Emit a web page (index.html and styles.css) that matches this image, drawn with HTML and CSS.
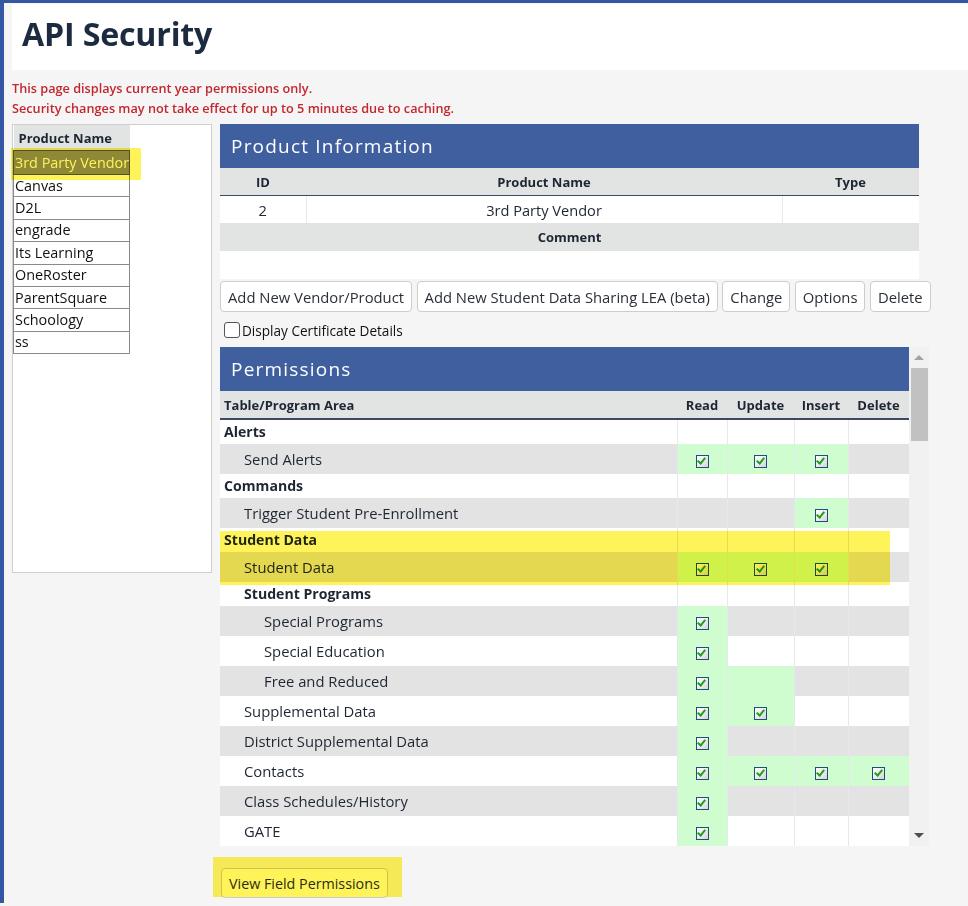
FILE: index.html
```html
<!DOCTYPE html>
<html lang="en">
<head>
<meta charset="utf-8">
<title>API Security</title>
<link rel="stylesheet" href="styles.css">
</head>
<body>
<div class="frame">
  <header class="page-head"><h1>API Security</h1></header>
  <div class="notes">
    <p>This page displays current year permissions only.</p>
    <p>Security changes may not take effect for up to 5 minutes due to caching.</p>
  </div>
  <div class="main">
    <aside class="products">
      <table class="plist">
        <thead><tr><th>Product Name</th></tr></thead>
        <tbody>
          <tr class="sel"><td>3rd Party Vendor</td></tr>
          <tr><td>Canvas</td></tr>
          <tr><td>D2L</td></tr>
          <tr><td>engrade</td></tr>
          <tr><td>Its Learning</td></tr>
          <tr><td>OneRoster</td></tr>
          <tr><td>ParentSquare</td></tr>
          <tr><td>Schoology</td></tr>
          <tr><td>ss</td></tr>
        </tbody>
      </table>
      <div class="hl hl-product"></div>
    </aside>
    <section class="detail">
      <div class="panel info">
        <div class="panel-title">Product Information</div>
        <table class="itable">
          <thead><tr><th class="c-id">ID</th><th class="c-name">Product Name</th><th class="c-type">Type</th></tr></thead>
          <tbody>
            <tr class="irow"><td>2</td><td>3rd Party Vendor</td><td></td></tr>
            <tr class="ihead"><th colspan="3">Comment</th></tr>
            <tr class="iempty"><td colspan="3"></td></tr>
          </tbody>
        </table>
      </div>
      <div class="actions">
        <button class="btn">Add New Vendor/Product</button>
        <button class="btn">Add New Student Data Sharing LEA (beta)</button>
        <button class="btn">Change</button>
        <button class="btn">Options</button>
        <button class="btn">Delete</button>
      </div>
      <label class="cert"><span class="cert-box"></span>Display Certificate Details</label>
      <div class="perm-wrap">
        <div class="perm-scroll">
          <div class="panel-title perm-title">Permissions</div>
          <table class="ptable">
            <colgroup><col class="w-area"><col class="w-r"><col class="w-u"><col class="w-i"><col class="w-d"></colgroup>
            <thead><tr><th class="area">Table/Program Area</th><th>Read</th><th>Update</th><th>Insert</th><th>Delete</th></tr></thead>
            <tbody>
              <tr class="grp"><td class="area">Alerts</td><td></td><td></td><td></td><td></td></tr>
              <tr class="item alt"><td class="area l1">Send Alerts</td><td class="on"><span class="cb"></span></td><td class="on"><span class="cb"></span></td><td class="on"><span class="cb"></span></td><td></td></tr>
              <tr class="grp"><td class="area">Commands</td><td></td><td></td><td></td><td></td></tr>
              <tr class="item alt"><td class="area l1">Trigger Student Pre-Enrollment</td><td></td><td></td><td class="on"><span class="cb"></span></td><td></td></tr>
              <tr class="grp"><td class="area">Student Data</td><td></td><td></td><td></td><td></td></tr>
              <tr class="item alt"><td class="area l1">Student Data</td><td class="on"><span class="cb"></span></td><td class="on"><span class="cb"></span></td><td class="on"><span class="cb"></span></td><td></td></tr>
              <tr class="grp"><td class="area l1">Student Programs</td><td></td><td></td><td></td><td></td></tr>
              <tr class="item alt"><td class="area l2">Special Programs</td><td class="on"><span class="cb"></span></td><td></td><td></td><td></td></tr>
              <tr class="item"><td class="area l2">Special Education</td><td class="on"><span class="cb"></span></td><td></td><td></td><td></td></tr>
              <tr class="item alt"><td class="area l2">Free and Reduced</td><td class="on"><span class="cb"></span></td><td class="on"></td><td></td><td></td></tr>
              <tr class="item"><td class="area l1">Supplemental Data</td><td class="on"><span class="cb"></span></td><td class="on"><span class="cb"></span></td><td></td><td></td></tr>
              <tr class="item alt"><td class="area l1">District Supplemental Data</td><td class="on"><span class="cb"></span></td><td></td><td></td><td></td></tr>
              <tr class="item"><td class="area l1">Contacts</td><td class="on"><span class="cb"></span></td><td class="on"><span class="cb"></span></td><td class="on"><span class="cb"></span></td><td class="on"><span class="cb"></span></td></tr>
              <tr class="item alt"><td class="area l1">Class Schedules/History</td><td class="on"><span class="cb"></span></td><td></td><td></td><td></td></tr>
              <tr class="item"><td class="area l1">GATE</td><td class="on"><span class="cb"></span></td><td></td><td></td><td></td></tr>
              <tr class="item alt"><td class="area l1"></td><td class="on"></td><td class="on"></td><td class="on"></td><td class="on"></td></tr>
            </tbody>
          </table>
          <div class="hl hl-perm"></div>
        </div>
        <div class="vscroll">
          <span class="arr up"></span>
          <span class="thumb"></span>
          <span class="track-fill"></span>
          <span class="arr down"></span>
        </div>
      </div>
      <div class="field-wrap">
        <button class="btn">View Field Permissions</button>
        <div class="hl hl-btn"></div>
      </div>
    </section>
  </div>
</div>
</body>
</html>
```
FILE: styles.css
```css
html, body {
  margin: 0;
  padding: 0;
  background: #f5f5f5;
  font-family: "Open Sans", "Liberation Sans", sans-serif;
  color: #1e2633;
}
.frame {
  border-top: 3px solid #3456a3;
  border-left: 4px solid #3456a3;
  min-height: 903px;
  box-sizing: border-box;
  overflow: hidden;
}
.page-head {
  background: #fff;
  margin: 1px 0 0 8px;
  height: 66px;
  box-sizing: border-box;
  display: flex;
  align-items: center;
  padding: 0 0 7px 10px;
}
.page-head h1 {
  margin: 0;
  font-size: 32.2px;
  font-weight: 700;
  color: #1c2b3f;
  letter-spacing: -0.2px;
}
.notes {
  margin: 8px 0 0 8px;
}
.notes p {
  margin: 0;
  line-height: 20px;
  font-size: 12.7px;
  font-weight: 600;
  color: #c4262e;
}
.main {
  display: flex;
  align-items: flex-start;
  margin: 6px 0 0 8px;
  gap: 8px;
}
.products {
  position: relative;
  width: 200px;
  height: 449px;
  box-sizing: border-box;
  background: #fff;
  border: 1px solid #cfcfcf;
}
.plist {
  border-collapse: collapse;
  width: 117px;
  table-layout: fixed;
}
.plist th {
  background: #e2e4e4;
  height: 25px;
  padding: 0 0 0 5px;
  text-align: left;
  font-size: 13px;
  font-weight: 700;
  color: #1e2633;
}
.plist td {
  border: 1px solid #8a8a8a;
  height: 21.4px;
  padding: 0 0 0 1px;
  font-size: 14.4px;
  line-height: 20px;
  white-space: nowrap;
  overflow: hidden;
  color: #111;
}
.plist tr.sel td {
  background: #8e8f9c;
  color: #fff;
  border-color: #555;
  height: 23px;
}
.hl {
  position: absolute;
  background: #fff35a;
  mix-blend-mode: multiply;
  pointer-events: none;
}
.hl-product {
  left: -2px;
  top: 23px;
  width: 130px;
  height: 32px;
}
.detail {
  display: flex;
  flex-direction: column;
  width: 709px;
}
.panel-title {
  background: #3f5f9f;
  color: #fff;
  height: 44px;
  line-height: 44px;
  padding-left: 11px;
  font-size: 19px;
  letter-spacing: 1.2px;
}
.perm-title {
  height: 44px;
  line-height: 45px;
}
.info {
  width: 699px;
}
.itable {
  width: 699px;
  border-collapse: collapse;
  table-layout: fixed;
  font-size: 13px;
}
.itable thead th {
  background: #e2e4e4;
  height: 27px;
  border-bottom: 1px solid #3b4a63;
  font-weight: 700;
  padding: 0;
}
.c-id { width: 86px; }
.c-name { width: 476px; }
.c-type { width: 137px; }
.irow td {
  background: #fff;
  height: 27px;
  text-align: center;
  font-size: 14.6px;
  border-right: 1px solid #e4eaee;
  padding: 0;
}
.irow td:last-child { border-right: 0; }
.ihead th {
  background: #e2e4e4;
  height: 28px;
  font-weight: 700;
  padding: 0;
}
.iempty td {
  background: #fff;
  height: 28px;
  padding: 0;
}
.actions {
  display: flex;
  gap: 4.5px;
  margin-top: 2px;
  width: 720px;
}
.btn {
  font-family: inherit;
  font-size: 14.8px;
  color: #2a2f38;
  background: #fff;
  border: 1px solid #cdcdcd;
  border-radius: 4px;
  height: 31px;
  padding: 0 7px;
  white-space: nowrap;
  cursor: pointer;
}
.cert {
  display: flex;
  align-items: center;
  gap: 2px;
  margin: 9px 0 0 4px;
  height: 18px;
  font-size: 13.6px;
  color: #111;
}
.cert-box {
  width: 16px;
  height: 16px;
  border: 1px solid #555;
  border-radius: 3px;
  background: #fff;
  box-sizing: border-box;
}
.perm-wrap {
  display: flex;
  margin-top: 8px;
  height: 499px;
  width: 709px;
}
.perm-scroll {
  position: relative;
  width: 689px;
  height: 499px;
  overflow: hidden;
  background: #fff;
}
.ptable {
  width: 689px;
  border-collapse: collapse;
  table-layout: fixed;
  font-size: 14.8px;
}
.w-area { width: 457px; }
.w-r { width: 50px; }
.w-u { width: 67px; }
.w-i { width: 54px; }
.w-d { width: 61px; }
.ptable thead th {
  background: #e2e4e4;
  height: 27px;
  font-size: 13px;
  font-weight: 700;
  border-bottom: 2px solid #3b4a63;
  padding: 0;
  text-align: center;
}
.ptable thead th.area {
  text-align: left;
  padding-left: 4px;
}
.ptable td {
  padding: 0;
  text-align: center;
  border-left: 1px solid #e3e9ed;
  vertical-align: middle;
}
.ptable td.area {
  border-left: 0;
  text-align: left;
  padding-left: 4px;
  color: #1e2633;
}
.ptable td.l1 { padding-left: 24px; }
.ptable td.l2 { padding-left: 44px; }
.grp td {
  height: 24px;
  background: #fff;
}
.grp td.area {
  font-weight: 700;
  font-size: 14.1px;
  line-height: 22px;
}
.item td {
  height: 30px;
  background: #fff;
}
.item.alt td {
  background: #e3e3e3;
}
.ptable td.on,
.item.alt td.on {
  background: #d0fdd0;
}
.cb {
  display: inline-block;
  vertical-align: middle;
  width: 13px;
  height: 13px;
  box-sizing: border-box;
  border: 1.5px solid #1d4f7f;
  background: linear-gradient(135deg, #ffffff 0%, #e8e8e8 60%, #d4d4d4 100%);
  position: relative;
}
.cb::after {
  content: "";
  position: absolute;
  left: 2.5px;
  top: 0px;
  width: 3px;
  height: 6px;
  border-right: 2.2px solid #1e9f1e;
  border-bottom: 2.2px solid #1e9f1e;
  transform: rotate(40deg);
}
.hl-perm {
  left: -4px;
  top: 184px;
  width: 674px;
  height: 54px;
}
.vscroll {
  width: 20px;
  height: 499px;
  background: #f1f1f1;
  display: flex;
  flex-direction: column;
  align-items: center;
}
.arr {
  width: 0;
  height: 0;
  border-left: 5px solid transparent;
  border-right: 5px solid transparent;
}
.arr.up {
  border-bottom: 5px solid #a3a3a3;
  margin: 8px 0 8px;
}
.arr.down {
  border-top: 5px solid #505050;
  margin: 0 0 8px;
}
.thumb {
  width: 17px;
  height: 73px;
  background: #c1c1c1;
}
.track-fill {
  flex: 1;
}
.field-wrap {
  position: relative;
  margin-top: 22px;
  align-self: flex-start;
}
.field-wrap .btn {
  height: 30px;
  margin-left: 1px;
  font-size: 14.3px;
}
.hl-btn {
  left: -7px;
  top: -11px;
  width: 189px;
  height: 40px;
}
```
